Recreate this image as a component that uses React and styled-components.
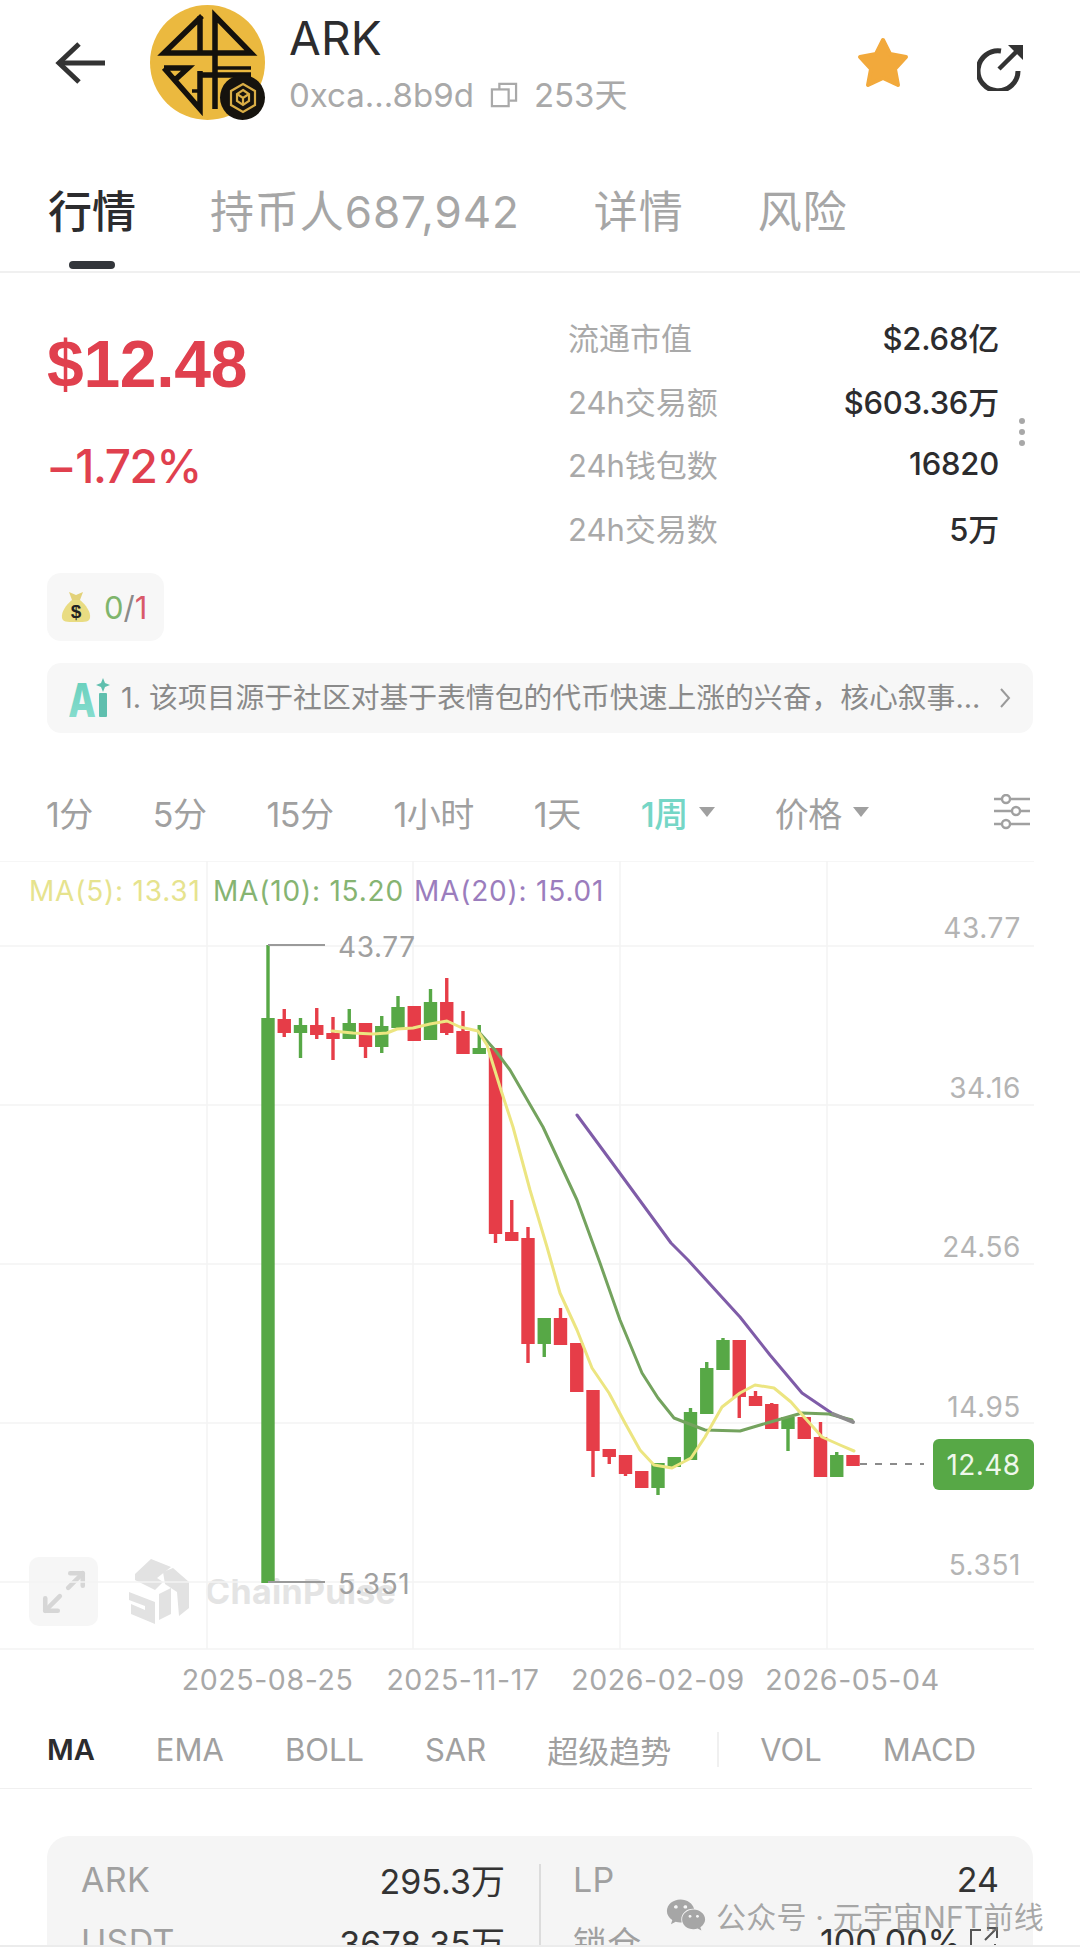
import React from 'react'
import styled, { createGlobalStyle } from 'styled-components'
import { Maximize2 } from 'lucide-react'
import { FaWeixin } from 'react-icons/fa'

const FONT = `Inter, "Noto Sans CJK SC", sans-serif`
const UP = '#57a846'
const DOWN = '#e0404e'

const GlobalStyle = createGlobalStyle`
  html, body {
    margin: 0;
    padding: 0;
    background: #fff;
  }
  body {
    font-family: ${FONT};
  }
`

const Page = styled.div`
  position: relative;
  width: 1080px;
  height: 1957px;
  overflow: hidden;
  background: #fff;
`

const Clip = styled.div`
  height: 1945px;
  overflow: hidden;
  border-bottom: 2px solid #ececec;
  box-sizing: content-box;
`

/* header */
const Header = styled.header`
  display: flex;
  height: 125px;
  padding: 5px 57px 0 55px;
  box-sizing: border-box;
`

const IconSlot = styled.div`
  display: flex;
  width: 50px;
  height: 42px;
  margin-top: ${(p) => p.$top || 0}px;
`

const AvatarWrap = styled.div`
  position: relative;
  width: 115px;
  height: 115px;
  margin-left: 45px;
`

const Avatar = styled.div`
  width: 115px;
  height: 115px;
  border-radius: 50%;
  background: #ebb93f;
`

const ChainBadge = styled.div`
  position: absolute;
  right: 0;
  bottom: 0;
  width: 45px;
  height: 45px;
  border-radius: 50%;
  background: #16130e;
  display: flex;
  align-items: center;
  justify-content: center;
`

const TokenInfo = styled.div`
  display: flex;
  flex-direction: column;
  margin-left: 24px;
  flex: 1;
`

const TokenName = styled.div`
  font-size: 46px;
  line-height: 52px;
  color: #2c2c2e;
  margin-top: 7px;
  letter-spacing: 0.2px;
`

const TokenMeta = styled.div`
  display: flex;
  align-items: center;
  font-size: 33px;
  line-height: 40px;
  color: #a9a9a9;
  margin-top: 11px;
`

const CopyIcon = styled.svg`
  width: 28px;
  height: 26px;
  margin: 0 16px 0 16px;
`

const HeaderAction = styled.svg`
  display: block;
  flex: none;
  margin-top: ${(p) => p.$top}px;
  margin-left: ${(p) => p.$left}px;
`

/* tabs */
const Tabs = styled.nav`
  display: flex;
  gap: 74px;
  padding: 61px 0 2px 48px;
  border-bottom: 2px solid #f0f0f0;
`

const Tab = styled.div`
  display: flex;
  flex-direction: column;
  align-items: center;
  font-size: 44px;
  line-height: 52px;
  color: ${(p) => (p.$active ? '#2c2c2e' : '#a6a6a6')};
  font-weight: ${(p) => (p.$active ? 500 : 400)};
  letter-spacing: ${(p) => (p.$active ? 0 : 0.9)}px;

  &::after {
    content: '';
    display: block;
    width: 46px;
    height: 8px;
    margin-top: 23px;
    border-radius: 4px;
    background: ${(p) => (p.$active ? '#33363b' : 'transparent')};
  }
`

/* market stats */
const Market = styled.section`
  display: flex;
  align-items: center;
  padding: 32px 0 0 48px;
`

const PriceCol = styled.div`
  width: 520px;
  display: flex;
  flex-direction: column;
  align-self: flex-start;
  color: ${DOWN};
`

const Price = styled.div`
  font-family: "Liberation Sans", sans-serif;
  font-size: 66px;
  line-height: 80px;
  font-weight: 700;
  margin: 19px 0 0 -1px;
  letter-spacing: -0.3px;
`

const Change = styled.div`
  font-size: 46px;
  line-height: 60px;
  font-weight: 500;
  margin: 32px 0 0 -2px;
  letter-spacing: -1.4px;
`

const Stats = styled.div`
  width: 431px;
`

const StatRow = styled.div`
  display: flex;
  justify-content: space-between;
  align-items: center;
  height: 63.5px;
  font-size: 31px;
`

const StatLabel = styled.span`
  color: #a9a9a9;
`

const StatValue = styled.span`
  color: #2c2c2e;
  font-weight: 450;
  letter-spacing: -0.2px;
`

const Dots = styled.div`
  display: flex;
  flex-direction: column;
  gap: 5px;
  margin-left: 20px;

  i {
    width: 6px;
    height: 6px;
    border-radius: 50%;
    background: #a8a8a8;
  }
`

const Pill = styled.div`
  display: flex;
  align-items: center;
  width: 117px;
  height: 68px;
  margin: 14px 0 0 47px;
  padding-left: 13px;
  box-sizing: border-box;
  border-radius: 14px;
  background: #f7f7f7;
  font-size: 31px;
  color: #888;
`

const Tone = styled.span`
  color: ${(p) => p.$color};
`

const AiBar = styled.div`
  display: flex;
  align-items: center;
  height: 70px;
  margin: 22px 47px 0;
  padding: 0 22px;
  box-sizing: border-box;
  border-radius: 14px;
  background: #f7f7f7;
  font-size: 28.8px;
  line-height: 66px;
  color: #8a8a8a;
  white-space: nowrap;
`

const AiText = styled.span`
  flex: 1;
  margin-left: 10px;
`

/* timeframe row */
const TimeRow = styled.div`
  display: flex;
  align-items: center;
  gap: 60px;
  height: 68px;
  margin-top: 45px;
  padding: 0 50px 0 46px;
  font-size: 34px;
  color: #a0a0a0;
`

const TimeItem = styled.span`
  display: flex;
  align-items: center;
  gap: 11px;
  color: ${(p) => (p.$active ? '#75d6c6' : '#a0a0a0')};
  font-weight: ${(p) => (p.$active ? 500 : 400)};
  letter-spacing: -0.5px;

  &:last-of-type {
    margin-right: auto;
  }
`

const Caret = styled.i`
  width: 0;
  height: 0;
  border-left: 8px solid transparent;
  border-right: 8px solid transparent;
  border-top: 10px solid #a0a0a0;
`

/* chart */
const ChartWrap = styled.div`
  position: relative;
  height: 849px;
  margin-top: 15px;
`

const ChartSvg = styled.svg`
  position: absolute;
  inset: 0;
  display: block;
  font-family: ${FONT};
`

const ExpandBox = styled.div`
  position: absolute;
  left: 29px;
  top: 696px;
  width: 69px;
  height: 69px;
  border-radius: 10px;
  background: #f6f6f6;
  display: flex;
  align-items: center;
  justify-content: center;
  color: #d6d6d6;
`

const Watermark = styled.div`
  position: absolute;
  left: 127px;
  top: 697px;
  display: flex;
  align-items: center;
  gap: 16px;
  font-size: 34px;
  font-weight: 700;
  color: #e4e4e4;
  letter-spacing: 0.3px;
`

/* indicators */
const IndicatorRow = styled.div`
  display: flex;
  align-items: center;
  gap: 61px;
  width: 1032px;
  height: 79px;
  padding-left: 47px;
  box-sizing: border-box;
  border-bottom: 1px solid #f0f0f0;
  font-size: 31px;
  color: #a0a0a0;
`

const Indicator = styled.span`
  color: ${(p) => (p.$active ? '#2c2c2e' : '#a0a0a0')};
  font-weight: ${(p) => (p.$active ? 600 : 400)};
  font-size: ${(p) => (p.$active ? 29 : 31)}px;
`

const IndicatorDivider = styled.i`
  width: 2px;
  height: 35px;
  margin: 0 -20px 0 -15px;
  background: #f0f0f0;
`

/* pool card */
const PoolCard = styled.section`
  display: grid;
  grid-template-columns: 492px 494px;
  width: 986px;
  height: 220px;
  margin: 47px 0 0 47px;
  border-radius: 22px;
  background: #f5f5f5;
`

const PoolCol = styled.div`
  position: relative;
  padding: 12px 34px 0;

  &::before {
    content: '';
    display: ${(p) => (p.$divided ? 'block' : 'none')};
    position: absolute;
    left: 0;
    top: 28px;
    bottom: 0;
    width: 2px;
    background: #dcdcdc;
  }
`

const PoolRow = styled.div`
  display: flex;
  justify-content: space-between;
  align-items: center;
  height: 62px;
  font-size: 34px;
  color: #333;
`

const PoolLabel = styled.span`
  color: #a0a0a0;
  letter-spacing: 0.3px;
`

const PoolValue = styled.span`
  display: flex;
  align-items: center;
  gap: 8px;
`

const Footnote = styled.div`
  position: absolute;
  left: 666px;
  top: 1893px;
  display: flex;
  align-items: center;
  gap: 10px;
  font-size: 30px;
  color: rgba(125, 125, 125, 0.66);
  white-space: nowrap;
  letter-spacing: 0.2px;
`

const TIMES = ['1分', '5分', '15分', '1小时', '1天']
const INDICATORS = ['EMA', 'BOLL', 'SAR', '超级趋势']

// body top/bottom, wick top/bottom in page y
const CANDLES = [
  ['G', 1018, 1583, 945, 1583],
  ['R', 1019, 1033, 1009, 1037],
  ['G', 1025, 1033, 1018, 1058],
  ['R', 1025, 1035, 1008, 1039],
  ['R', 1033, 1039, 1017, 1060],
  ['G', 1023, 1039, 1009, 1039],
  ['R', 1023, 1047, 1023, 1058],
  ['G', 1026, 1047, 1016, 1053],
  ['G', 1007, 1028, 996, 1028],
  ['R', 1006, 1041, 1006, 1041],
  ['G', 1002, 1040, 989, 1040],
  ['R', 1002, 1033, 978, 1035],
  ['R', 1031, 1054, 1011, 1054],
  ['G', 1048, 1054, 1025, 1054],
  ['R', 1048, 1234, 1048, 1243],
  ['R', 1232, 1241, 1200, 1241],
  ['R', 1238, 1344, 1227, 1363],
  ['G', 1318, 1344, 1318, 1357],
  ['R', 1318, 1345, 1308, 1345],
  ['R', 1343, 1392, 1343, 1392],
  ['R', 1390, 1451, 1390, 1477],
  ['R', 1449, 1457, 1449, 1464],
  ['R', 1455, 1474, 1455, 1476],
  ['R', 1471, 1488, 1471, 1488],
  ['G', 1463, 1488, 1463, 1495],
  ['G', 1457, 1467, 1457, 1467],
  ['G', 1412, 1460, 1408, 1460],
  ['G', 1368, 1414, 1362, 1414],
  ['G', 1340, 1370, 1338, 1370],
  ['R', 1340, 1397, 1340, 1418],
  ['R', 1396, 1406, 1391, 1406],
  ['R', 1404, 1429, 1403, 1429],
  ['G', 1417, 1429, 1417, 1451],
  ['R', 1417, 1439, 1417, 1439],
  ['R', 1437, 1477, 1422, 1477],
  ['G', 1455, 1477, 1452, 1477],
  ['R', 1455, 1466, 1455, 1466],
]

const MA5 = '332,1031 353,1033 373,1034 387,1033 397,1029 413,1028 430,1024 447,1021 460,1027 478,1031 487,1045 500,1087 513,1127 530,1190 547,1247 560,1293 577,1330 592,1368 609,1393 625,1423 640,1450 654,1465 672,1468 691,1458 705,1437 722,1407 740,1393 755,1385 774,1388 791,1402 805,1418 822,1437 840,1445 854,1451'
const MA10 = '478,1031 495,1050 510,1070 543,1127 577,1200 600,1263 620,1320 642,1373 658,1398 674,1418 705,1430 740,1431 767,1423 802,1413 829,1414 852,1420'
const MA20 = '577,1115 619,1172 671,1243 688,1260 740,1317 770,1355 802,1393 833,1414'

const Y_LABELS = [
  ['43.77', 928],
  ['34.16', 1088],
  ['24.56', 1247],
  ['14.95', 1407],
  ['5.351', 1565],
]

const DATES = [
  ['2025-08-25', 267.5],
  ['2025-11-17', 463],
  ['2026-02-09', 658],
  ['2026-05-04', 852.5],
]

const LEGEND = [
  ['MA(5): 13.31', 29, '#e6e38e'],
  ['MA(10): 15.20', 213, '#86b472'],
  ['MA(20): 15.01', 414, '#9b7dbd'],
]

const BackArrow = () => (
  <svg width="50" height="42" viewBox="0 0 50 42" fill="none" stroke="#333" strokeWidth="5">
    <path d="M50 21H4" />
    <path d="M24 2 4 21l20 19" />
  </svg>
)

const TokenLogo = () => (
  <svg width="115" height="115" viewBox="0 0 115 115" fill="none" stroke="#14110c" strokeWidth="5.5">
    <path d="M50 11 V48 M52 11 14 48 H101 L65 11 V104" />
    <path d="M14 63 H38 L26 74 M14 63 50 104 V66 M50 70 H101" />
    <path d="M65 63 H101 M42 86 H50" strokeWidth="3.5" />
  </svg>
)

const ChainMark = () => (
  <svg width="34" height="34" viewBox="0 0 34 34" fill="none" stroke="#d9ad45" strokeWidth="2.2">
    <path d="M17 3 29 10V24L17 31 5 24V10Z" />
    <path d="M17 9 23 13V20L17 24 11 20V13Z" />
    <path d="M11 13 17 17 23 13M17 17V24" />
  </svg>
)

const Star = () => (
  <HeaderAction $top={32} $left={0} width="54" height="52" viewBox="0 0 54 52">
    <path
      d="M27 3 34 17 50 20 39 32 42 48 27 41 12 48 15 32 4 20 20 17Z"
      fill="#f2a93b"
      stroke="#f2a93b"
      strokeWidth="4"
      strokeLinejoin="round"
    />
  </HeaderAction>
)

const ShareIcon = () => (
  <HeaderAction $top={40} $left={67} width="46" height="46" viewBox="0 0 46 46" fill="none">
    <path d="M24 6A20 20 0 1 0 41 26" stroke="#333" strokeWidth="5" />
    <path d="M22 24 41 5" stroke="#333" strokeWidth="4.5" />
    <path d="M31 0H46V15Z" fill="#333" />
  </HeaderAction>
)

const MoneyBag = () => (
  <svg width="32" height="32" viewBox="0 0 32 32" style={{ marginRight: 12 }}>
    <path d="M9 1 16 4 23 1 20 9H12Z" fill="#e3d27a" />
    <path d="M12 9H20C26 14 31 21 30 27 29 31 26 31 16 31 6 31 3 31 2 27 1 21 6 14 12 9Z" fill="#e9dc82" />
    <text x="16" y="27" textAnchor="middle" fontSize="19" fontWeight="700" fontFamily="Liberation Sans, sans-serif" fill="#222">$</text>
  </svg>
)

const AiMark = () => (
  <svg width="42" height="40" viewBox="0 0 42 40">
    <defs>
      <linearGradient id="aiFill" x1="0" y1="0" x2="0" y2="1">
        <stop offset="0" stopColor="#62cdb9" />
        <stop offset="1" stopColor="#8ee0d2" />
      </linearGradient>
    </defs>
    <text x="-1" y="39" fontSize="46" fontWeight="800" fontFamily="Inter, sans-serif" fill="url(#aiFill)" transform="scale(0.78 1)">A</text>
    <rect x="30" y="15" width="8" height="24" rx="1" fill="#5fbfae" />
    <path d="M34 0 36 5 41 7 36 9 34 14 32 9 27 7 32 5Z" fill="#5fbfae" />
  </svg>
)

const Chevron = () => (
  <svg width="12" height="20" viewBox="0 0 12 20" fill="none" stroke="#9a9a9a" strokeWidth="2">
    <path d="M2 1 10 10 2 19" />
  </svg>
)

const SlidersIcon = () => (
  <svg width="36" height="36" viewBox="0 0 36 36" fill="none" stroke="#a0a0a0" strokeWidth="2.4">
    <path d="M0 5H8M16 5H36M0 17H18M26 17H36M0 30H8M16 30H36" />
    <circle cx="12" cy="5" r="4" />
    <circle cx="22" cy="17" r="4" />
    <circle cx="12" cy="30" r="4" />
  </svg>
)

const PulseLogo = () => (
  <svg width="62" height="66" viewBox="0 0 62 66" fill="#e2e2e2">
    <path d="M8 16 24 1 44 9 30 20 36 24 28 32 8 22Z" />
    <path d="M36 14 46 10 62 24V50L52 58 50 34 38 26Z" />
    <path d="M2 34 28 44V66L4 56V46L18 52V48L2 42Z" />
    <path d="M32 36 44 30V56L32 62Z" />
  </svg>
)

const ExternalIcon = () => (
  <svg width="30" height="30" viewBox="0 0 30 30" fill="none" stroke="#555" strokeWidth="2">
    <path d="M12 4H2V28H26V18M16 14 28 2M18 2H28V12" />
  </svg>
)

const Chart = () => (
  <ChartSvg width="1080" height="849" viewBox="0 861 1080 849">
    <g stroke="#f4f4f4" strokeWidth="1.5">
      <path d="M0 861H1034M0 946H1034M0 1105H1034M0 1264H1034M0 1423H1034M0 1582H1034M0 1649H1034" />
      <path d="M207 861V1649M413 861V1649M620 861V1649M827 861V1649" />
    </g>

    {CANDLES.map(([tone, top, bottom, wickTop, wickBottom], i) => {
      const cx = 268 + i * 16.25
      const color = tone === 'G' ? UP : '#e63d48'
      return (
        <g key={i} fill={color}>
          <rect x={cx - 1.7} y={wickTop} width="3.4" height={wickBottom - wickTop} />
          <rect x={cx - 6.7} y={top} width="13.4" height={bottom - top} />
        </g>
      )
    })}

    <g fill="none" strokeLinejoin="round" strokeLinecap="round">
      <polyline points={MA20} stroke="#7f5ca8" strokeWidth="3" />
      <polyline points={MA10} stroke="#74a35e" strokeWidth="3" />
      <polyline points="833,1414 853,1422" stroke="#8c8c8c" strokeWidth="4" />
      <polyline points={MA5} stroke="#ece581" strokeWidth="3" />
    </g>

    <path d="M268 945H325M268 1582H325" stroke="#9a9a9a" strokeWidth="2" fill="none" />
    <path d="M860 1464H924" stroke="#666" strokeWidth="1.6" strokeDasharray="7 8" />
    <text x="338" y="957" fontSize="28" fill="#a0a0a0" letterSpacing="0.6">43.77</text>
    <text x="338" y="1594" fontSize="28" fill="#a0a0a0" letterSpacing="0.6">5.351</text>

    {LEGEND.map(([text, x, color]) => (
      <text key={text} x={x} y="901" fontSize="28" fill={color} letterSpacing="0.8">{text}</text>
    ))}

    {Y_LABELS.map(([text, y]) => (
      <text key={text} x="1021" y={y + 10} fontSize="28" fill="#b4b4b4" textAnchor="end" letterSpacing="0.6">{text}</text>
    ))}

    <rect x="933" y="1439" width="101" height="51" rx="6" fill={UP} />
    <text x="983.5" y="1475" fontSize="28" fill="#eef7ea" textAnchor="middle" letterSpacing="0.4">12.48</text>

    {DATES.map(([text, x]) => (
      <text key={text} x={x} y="1690" fontSize="28.5" fill="#a8a8a8" textAnchor="middle" letterSpacing="0.6">{text}</text>
    ))}
  </ChartSvg>
)

export default function App() {
  return (
    <Page>
      <GlobalStyle />
      <Clip>
        <Header>
          <IconSlot $top={37}>
            <BackArrow />
          </IconSlot>
          <AvatarWrap>
            <Avatar>
              <TokenLogo />
            </Avatar>
            <ChainBadge>
              <ChainMark />
            </ChainBadge>
          </AvatarWrap>
          <TokenInfo>
            <TokenName>ARK</TokenName>
            <TokenMeta>
              0xca...8b9d
              <CopyIcon viewBox="0 0 30 28" fill="none" stroke="#a9a9a9" strokeWidth="2.4">
                <path d="M10 8V2H28V20H21" />
                <rect x="2" y="8" width="18" height="18" />
              </CopyIcon>
              253天
            </TokenMeta>
          </TokenInfo>
          <Star />
          <ShareIcon />
        </Header>

        <Tabs>
          <Tab $active>行情</Tab>
          <Tab>持币人687,942</Tab>
          <Tab>详情</Tab>
          <Tab>风险</Tab>
        </Tabs>

        <Market>
          <PriceCol>
            <Price>$12.48</Price>
            <Change>−1.72%</Change>
          </PriceCol>
          <Stats>
            <StatRow><StatLabel>流通市值</StatLabel><StatValue>$2.68亿</StatValue></StatRow>
            <StatRow><StatLabel>24h交易额</StatLabel><StatValue>$603.36万</StatValue></StatRow>
            <StatRow><StatLabel>24h钱包数</StatLabel><StatValue>16820</StatValue></StatRow>
            <StatRow><StatLabel>24h交易数</StatLabel><StatValue>5万</StatValue></StatRow>
          </Stats>
          <Dots><i /><i /><i /></Dots>
        </Market>

        <Pill>
          <MoneyBag />
          <Tone $color="#7fb56c">0</Tone>
          <Tone $color="#8a8a8a">/</Tone>
          <Tone $color="#d9596a">1</Tone>
        </Pill>

        <AiBar>
          <AiMark />
          <AiText>1. 该项目源于社区对基于表情包的代币快速上涨的兴奋，核心叙事...</AiText>
          <Chevron />
        </AiBar>

        <TimeRow>
          {TIMES.map((t) => <TimeItem key={t}>{t}</TimeItem>)}
          <TimeItem $active>1周<Caret /></TimeItem>
          <TimeItem>价格<Caret /></TimeItem>
          <SlidersIcon />
        </TimeRow>

        <ChartWrap>
          <ExpandBox>
            <Maximize2 size={50} strokeWidth={2.2} />
          </ExpandBox>
          <Watermark>
            <PulseLogo />
            ChainPulse
          </Watermark>
          <Chart />
        </ChartWrap>

        <IndicatorRow>
          <Indicator $active>MA</Indicator>
          {INDICATORS.map((t) => <Indicator key={t}>{t}</Indicator>)}
          <IndicatorDivider />
          <Indicator>VOL</Indicator>
          <Indicator>MACD</Indicator>
        </IndicatorRow>

        <PoolCard>
          <PoolCol>
            <PoolRow><PoolLabel>ARK</PoolLabel><PoolValue>295.3万</PoolValue></PoolRow>
            <PoolRow><PoolLabel>USDT</PoolLabel><PoolValue>3678.35万</PoolValue></PoolRow>
          </PoolCol>
          <PoolCol $divided>
            <PoolRow><PoolLabel>LP</PoolLabel><PoolValue>24</PoolValue></PoolRow>
            <PoolRow><PoolLabel>锁仓</PoolLabel><PoolValue>100.00%<ExternalIcon /></PoolValue></PoolRow>
          </PoolCol>
        </PoolCard>
      </Clip>

      <Footnote>
        <FaWeixin size={40} />
        公众号 · 元宇宙NFT前线
      </Footnote>
    </Page>
  )
}
